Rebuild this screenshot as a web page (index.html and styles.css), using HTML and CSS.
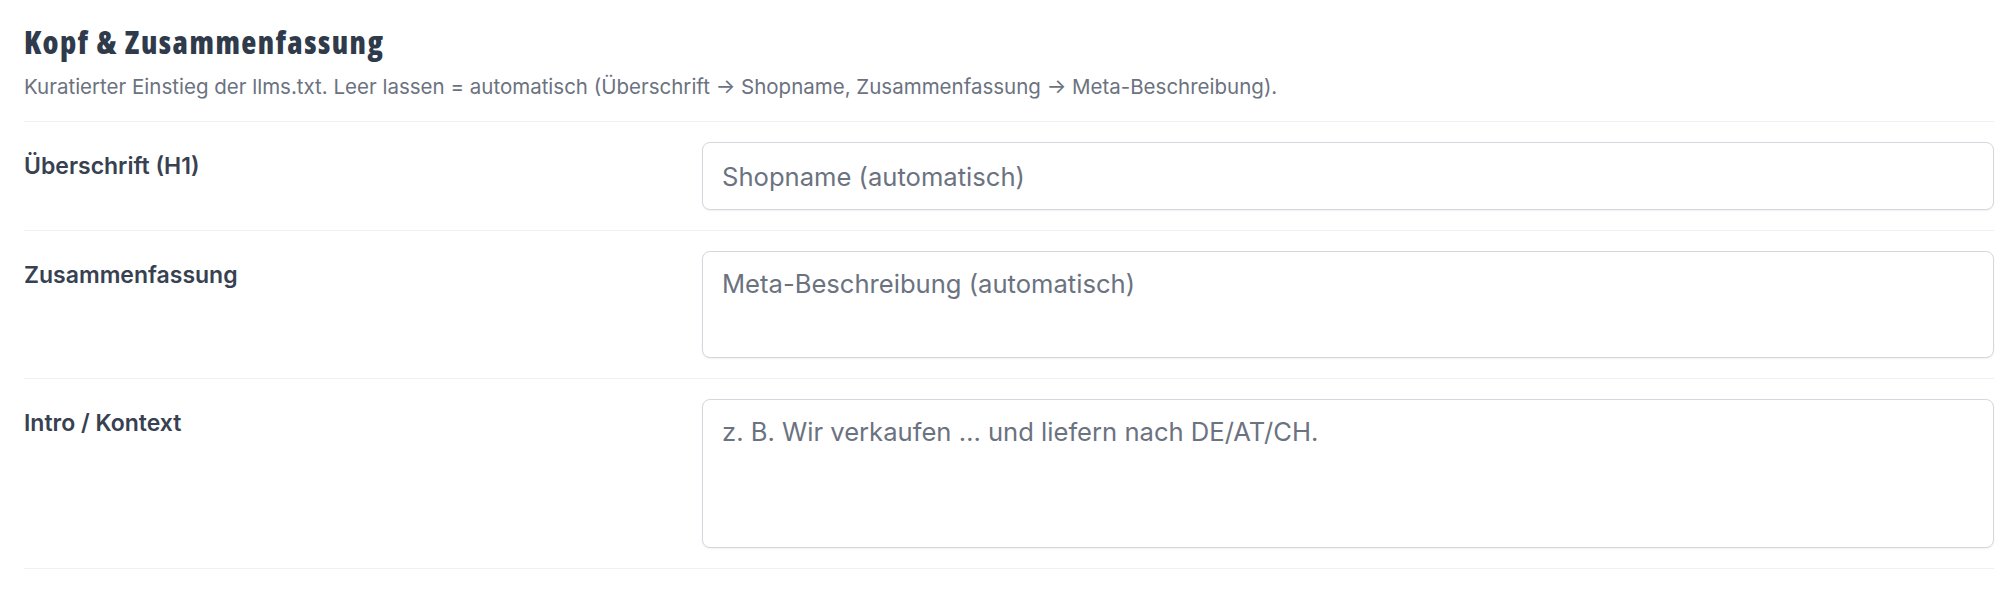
FILE: index.html
```html
<!DOCTYPE html>
<html lang="de">
<head>
    <meta charset="UTF-8">
    <meta name="viewport" content="width=device-width, initial-scale=1.0">
    <title>llms.txt – Kopf &amp; Zusammenfassung</title>
    <link rel="stylesheet" href="styles.css">
</head>
<body>
    <div class="panel">
        <div class="panel-head">
            <h2>Kopf &amp; Zusammenfassung</h2>
            <p>Kuratierter Einstieg der llms.txt. Leer lassen = automatisch (Überschrift → Shopname, Zusammenfassung → Meta-Beschreibung).</p>
        </div>
        <div class="field">
            <label for="llms-title">Überschrift (H1)</label>
            <input type="text" id="llms-title" placeholder="Shopname (automatisch)">
        </div>
        <div class="field">
            <label for="llms-summary">Zusammenfassung</label>
            <textarea id="llms-summary" class="short" placeholder="Meta-Beschreibung (automatisch)"></textarea>
        </div>
        <div class="field">
            <label for="llms-intro">Intro / Kontext</label>
            <textarea id="llms-intro" class="tall" placeholder="z. B. Wir verkaufen … und liefern nach DE/AT/CH."></textarea>
        </div>
    </div>
</body>
</html>
```

FILE: styles.css
```css
body {
    margin: 0;
    padding: 0;
    background-color: #fff;
    color: #374151;
    font-family: 'Inter', 'Noto Sans', sans-serif;
}
.panel {
    padding: 24px 20px 0 24px;
}
.panel-head {
    padding-bottom: 19px;
    border-bottom: 1px solid #eef0f3;
}
.panel-head h2 {
    margin: 0;
    font-family: 'Open Sans', 'DejaVu Sans Condensed', sans-serif;
    font-stretch: condensed;
    font-size: 31px;
    line-height: 36px;
    font-weight: 800;
    letter-spacing: 1.5px;
    color: #2f3a4b;
}
.panel-head p {
    margin: 12px 0 0;
    font-size: 20.5px;
    line-height: 30px;
    color: #6b7280;
}
.field {
    display: grid;
    grid-template-columns: 1fr 2fr;
    gap: 32px;
    padding: 20px 0;
    border-bottom: 1px solid #eef0f3;
}
.field label {
    padding-top: 7px;
    font-size: 23px;
    line-height: 34px;
    font-weight: 600;
    color: #374151;
}
.field input,
.field textarea {
    box-sizing: border-box;
    width: 100%;
    margin: 0;
    padding: 14px 19px;
    border: 1px solid #d4d7dd;
    border-radius: 8px;
    box-shadow: 0 1px 2px rgba(16, 24, 40, 0.06);
    background-color: #fff;
    font-family: 'Inter', 'Noto Sans', sans-serif;
    font-size: 25.6px;
    line-height: 36px;
    color: #1f2937;
    resize: none;
    display: block;
}
.field input {
    height: 68px;
}
.field textarea.short {
    height: 107px;
}
.field textarea.tall {
    height: 149px;
}
.field input::placeholder,
.field textarea::placeholder {
    color: #6b7280;
    opacity: 1;
}
```
